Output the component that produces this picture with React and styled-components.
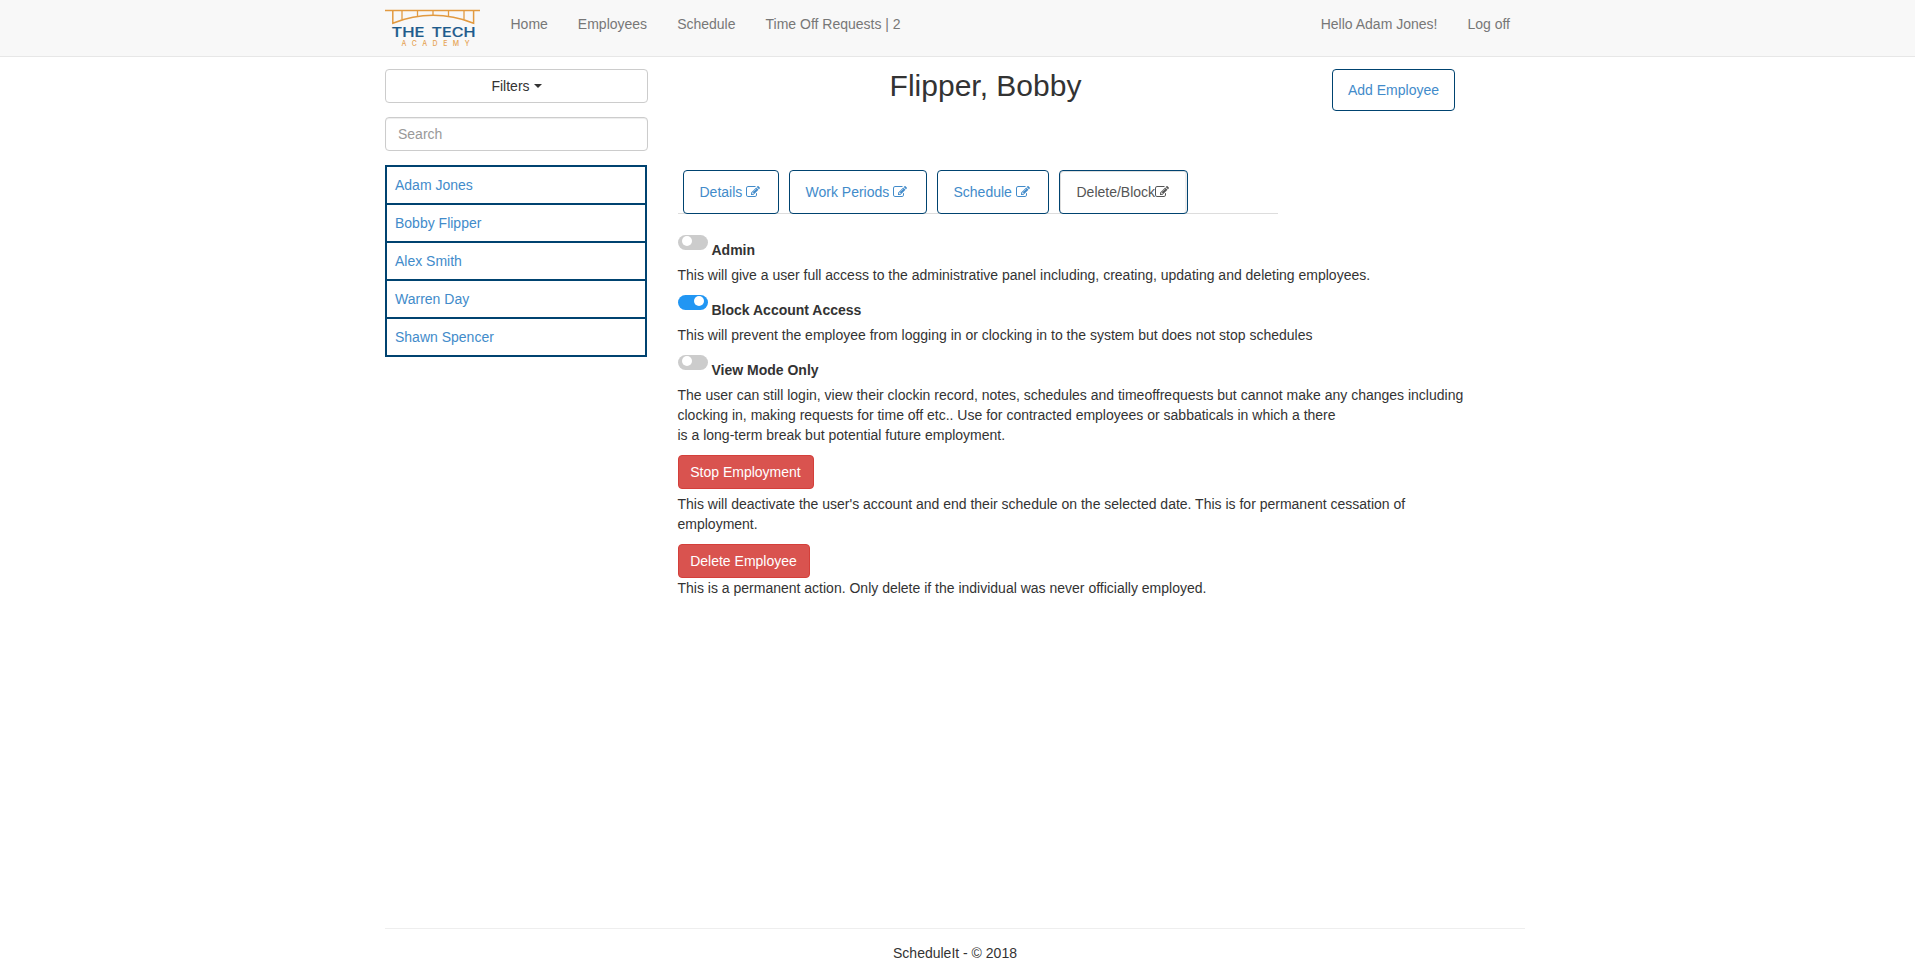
import React from 'react';
import styled, { createGlobalStyle, css } from 'styled-components';

const navy = '#004370';
const link = '#428bca';

const GlobalStyle = createGlobalStyle`
  *, *::before, *::after { box-sizing: border-box; }
  body {
    margin: 0;
    background: #fff;
    color: #333;
    font: 14px/20px "Liberation Sans", Arial, sans-serif;
  }
`;

const Page = styled.div`
  display: flex;
  flex-direction: column;
  height: 973px;
`;

const Navbar = styled.header`
  height: 57px;
  background: #f8f8f8;
  border-bottom: 1px solid #e7e7e7;
`;

const Container = styled.div`
  width: 1140px;
  margin-left: 385px;
`;

const NavInner = styled(Container)`
  display: flex;
  padding-top: 9px;
`;

const NavLinks = styled.nav`
  display: flex;
  padding-top: 5px;
  margin-left: ${({ $end }) => ($end ? 'auto' : '15.5px')};
`;

const NavLink = styled.a`
  padding: 0 15px;
  color: #777;
`;

const Main = styled(Container).attrs({ as: 'main' })`
  display: flex;
  flex: 1;
  padding-top: 12px;
`;

const Sidebar = styled.aside`
  width: 263px;
  display: flex;
  flex-direction: column;
  gap: 14px;
`;

const control = css`
  width: 100%;
  height: 34px;
  border: 1px solid #ccc;
  border-radius: 4px;
  background: #fff;
  font: inherit;
  padding: 6px 12px;
`;

const FilterButton = styled.button`
  ${control}
  display: flex;
  align-items: center;
  justify-content: center;
  gap: 4px;
  color: #333;
`;

const Caret = styled.span`
  border-top: 4px solid #333;
  border-left: 4px solid transparent;
  border-right: 4px solid transparent;
`;

const SearchInput = styled.input`
  ${control}
  box-shadow: inset 0 1px 1px rgba(0, 0, 0, 0.075);
  &::placeholder { color: #999; opacity: 1; }
`;

const EmployeeList = styled.ul`
  list-style: none;
  width: 262px;
  margin: 0;
  padding: 0;
  border: 2px solid ${navy};
`;

const EmployeeItem = styled.li`
  height: 38px;
  padding: 8px;
  color: ${link};
  border-bottom: 2px solid ${navy};
  &:last-child { height: 36px; border-bottom: 0; }
`;

const Content = styled.section`
  width: 800px;
  margin-left: 29.5px;
`;

const Heading = styled.div`
  display: flex;
  height: 101px;
  align-items: flex-start;
`;

const Title = styled.h1`
  width: 616px;
  margin: 0;
  font-size: 30px;
  line-height: 33px;
  font-weight: 400;
  text-align: center;
`;

const AddButton = styled.button`
  width: 123px;
  height: 42px;
  margin-left: 38.5px;
  padding: 0;
  border: 1px solid ${navy};
  border-radius: 4px;
  background: #fff;
  color: ${link};
  font: inherit;
`;

const Tabs = styled.nav`
  display: flex;
  gap: 10px;
  width: 600px;
  height: 44px;
  padding-left: 5px;
  box-shadow: inset 0 -1px #ddd;
`;

const Tab = styled.a`
  width: ${({ $width }) => $width}px;
  height: 44px;
  display: flex;
  align-items: center;
  padding-left: ${({ $active }) => ($active ? 17 : 16)}px;
  gap: ${({ $active }) => ($active ? 0 : '4px')};
  border: 1px solid ${navy};
  border-radius: 4px;
  background: #fff;
  color: ${({ $active }) => ($active ? '#555' : link)};
  white-space: nowrap;
  ${({ $active }) => $active && css`box-shadow: inset 1px 1px #ddd, inset -2px 0 #eee;`}
`;

const Settings = styled.div`
  padding-top: 21px;
`;

const Setting = styled.div`
  margin-bottom: 10px;
`;

const SettingHead = styled.label`
  display: flex;
  align-items: flex-start;
  gap: 4px;
  height: 30px;
  font-weight: 700;
`;

const SettingName = styled.span`
  padding-top: 5px;
`;

const Switch = styled.span`
  width: 30px;
  height: 15px;
  padding: 1px 4px;
  display: flex;
  justify-content: ${({ $on }) => ($on ? 'flex-end' : 'flex-start')};
  border-radius: 8px;
  background: ${({ $on }) => ($on ? '#2196f3' : '#ccc')};
`;

const Knob = styled.span`
  width: 10px;
  height: 10px;
  border-radius: 50%;
  background: #fff;
`;

const Text = styled.p`
  margin: 0;
  white-space: nowrap;
  padding-top: ${({ $top = 0 }) => $top}px;
`;

const DangerButton = styled.button`
  display: block;
  width: ${({ $width }) => $width}px;
  height: 34px;
  padding: 6px 0;
  border: 1px solid #d43f3a;
  border-radius: 4px;
  background: #d9534f;
  color: #fff;
  font: inherit;
  white-space: nowrap;
`;

const Footer = styled(Container).attrs({ as: 'footer' })`
  height: 45px;
  padding-top: 14px;
  border-top: 1px solid #eee;
  text-align: center;
`;

const Logo = () => (
  <svg width="95" height="38" viewBox="0 0 95 38" role="img" aria-label="The Tech Academy">
    <g fill="none" stroke="#e29a40" strokeWidth="1.5">
      <path d="M0 1.6H95" />
      <path d="M7.800 1.6V14.200Q48-1.500 88.600 14.200V1.6" />
      <path d="M17 1.6V10.500M32.500 1.6V7.200M48 1.6V6.500M63.500 1.6V7.200M79 1.6V10.500" strokeWidth="1.3" />
    </g>
    <g fontFamily="Inter, sans-serif" fontWeight="500" fontSize="12.600" fill="#1d5b8c" stroke="#1d5b8c" strokeWidth="0.2">
      <text x="6.500" y="28.300" textLength="33" lengthAdjust="spacingAndGlyphs">THE</text>
      <text x="46.500" y="28.300" textLength="44" lengthAdjust="spacingAndGlyphs">TECH</text>
    </g>
    <text x="16.500" y="36.900" fontFamily="Inter, sans-serif" fontWeight="500" fontSize="6.900" fill="#e6a455" textLength="68" lengthAdjust="spacing">ACADEMY</text>
  </svg>
);

const EditIcon = () => (
  <svg width="14" height="14" viewBox="0 0 1792 1792" fill="currentColor" aria-hidden="true">
    <path d="M888 1184l116-116-152-152-116 116v56h96v96h56zm440-720q-16-16-33 1l-350 350q-17 17-1 33t33-1l350-350q17-17 1-33zm80 594v190q0 119-84.5 203.5t-203.5 84.5h-832q-119 0-203.5-84.5t-84.5-203.5v-832q0-119 84.5-203.5t203.5-84.5h832q63 0 117 25 15 7 18 23 3 17-9 29l-49 49q-14 14-32 8-23-6-45-6h-832q-66 0-113 47t-47 113v832q0 66 47 113t113 47h832q66 0 113-47t47-113v-126q0-13 9-22l64-64q15-15 35-7t20 29zm-96-738l288 288-672 672h-288v-288zm444 132l-92 92-288-288 92-92q28-28 68-28t68 28l152 152q28 28 28 68t-28 68z" />
  </svg>
);

const employees = ['Adam Jones', 'Bobby Flipper', 'Alex Smith', 'Warren Day', 'Shawn Spencer'];

const tabs = [
  { label: 'Details', width: 96 },
  { label: 'Work Periods', width: 138 },
  { label: 'Schedule', width: 112 },
  { label: 'Delete/Block', width: 129, active: true },
];

const settings = [
  {
    name: 'Admin',
    text: 'This will give a user full access to the administrative panel including, creating, updating and deleting employees.',
  },
  {
    name: 'Block Account Access',
    on: true,
    text: 'This will prevent the employee from logging in or clocking in to the system but does not stop schedules',
  },
  {
    name: 'View Mode Only',
    text: (
      <>
        The user can still login, view their clockin record, notes, schedules and timeoffrequests but cannot make any changes including
        <br />
        clocking in, making requests for time off etc.. Use for contracted employees or sabbaticals in which a there
        <br />
        is a long-term break but potential future employment.
      </>
    ),
  },
];

export default function App() {
  return (
    <Page>
      <GlobalStyle />
      <Navbar>
        <NavInner>
          <Logo />
          <NavLinks>
            <NavLink>Home</NavLink>
            <NavLink>Employees</NavLink>
            <NavLink>Schedule</NavLink>
            <NavLink>Time Off Requests | 2</NavLink>
          </NavLinks>
          <NavLinks $end>
            <NavLink>Hello Adam Jones!</NavLink>
            <NavLink>Log off</NavLink>
          </NavLinks>
        </NavInner>
      </Navbar>
      <Main>
        <Sidebar>
          <FilterButton>Filters <Caret /></FilterButton>
          <SearchInput placeholder="Search" />
          <EmployeeList>
            {employees.map((name) => <EmployeeItem key={name}>{name}</EmployeeItem>)}
          </EmployeeList>
        </Sidebar>
        <Content>
          <Heading>
            <Title>Flipper, Bobby</Title>
            <AddButton>Add Employee</AddButton>
          </Heading>
          <Tabs>
            {tabs.map(({ label, width, active }) => (
              <Tab key={label} $width={width} $active={active}>{label}<EditIcon /></Tab>
            ))}
          </Tabs>
          <Settings>
            {settings.map(({ name, on, text }) => (
              <Setting key={name}>
                <SettingHead>
                  <Switch $on={on}><Knob /></Switch>
                  <SettingName>{name}</SettingName>
                </SettingHead>
                <Text>{text}</Text>
              </Setting>
            ))}
            <Setting>
              <DangerButton $width={136}>Stop Employment</DangerButton>
              <Text $top={5}>
                This will deactivate the user's account and end their schedule on the selected date. This is for permanent cessation of
                <br />
                employment.
              </Text>
            </Setting>
            <DangerButton $width={132}>Delete Employee</DangerButton>
            <Text>This is a permanent action. Only delete if the individual was never officially employed.</Text>
          </Settings>
        </Content>
      </Main>
      <Footer>ScheduleIt - © 2018</Footer>
    </Page>
  );
}
